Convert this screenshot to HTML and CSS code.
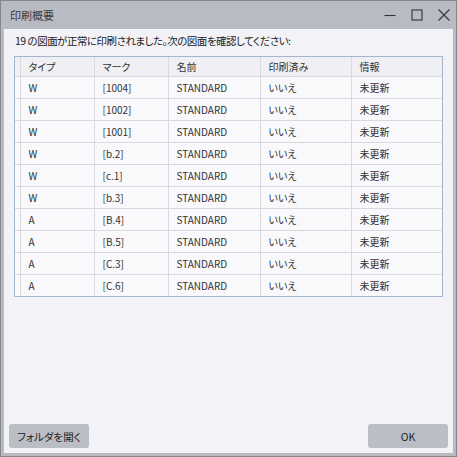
FILE: index.html
```html
<!DOCTYPE html>
<html lang="ja">
<head>
<meta charset="utf-8">
<link rel="stylesheet" href="styles.css">
</head>
<body>
<div class="window">
  <div class="titlebar">
    <div class="title">印刷概要</div>
    <div class="controls">
      <svg class="ctl" width="12" height="12" viewBox="0 0 12 12"><path d="M0.5 6.5H11.5" stroke="#333" stroke-width="1.1" fill="none"/></svg>
      <svg class="ctl" width="12" height="12" viewBox="0 0 12 12"><rect x="1" y="1" width="10" height="10" stroke="#333" stroke-width="1.1" fill="none"/></svg>
      <svg class="ctl" width="12" height="12" viewBox="0 0 12 12"><path d="M0.5 0.5L11.5 11.5M11.5 0.5L0.5 11.5" stroke="#333" stroke-width="1.1" fill="none"/></svg>
    </div>
  </div>
  <div class="content">
    <p class="msg">19 の図面が正常に印刷されました。次の図面を確認してください:</p>
    <div class="grid">
      <table>
        <thead>
          <tr><th class="rh"></th><th class="c1">タイプ</th><th class="c2">マーク</th><th class="c3">名前</th><th class="c4">印刷済み</th><th class="c5">情報</th></tr>
        </thead>
        <tbody>
          <tr><td class="rh"></td><td>W</td><td>[1004]</td><td>STANDARD</td><td>いいえ</td><td>未更新</td></tr>
          <tr><td class="rh"></td><td>W</td><td>[1002]</td><td>STANDARD</td><td>いいえ</td><td>未更新</td></tr>
          <tr><td class="rh"></td><td>W</td><td>[1001]</td><td>STANDARD</td><td>いいえ</td><td>未更新</td></tr>
          <tr><td class="rh"></td><td>W</td><td>[b.2]</td><td>STANDARD</td><td>いいえ</td><td>未更新</td></tr>
          <tr><td class="rh"></td><td>W</td><td>[c.1]</td><td>STANDARD</td><td>いいえ</td><td>未更新</td></tr>
          <tr><td class="rh"></td><td>W</td><td>[b.3]</td><td>STANDARD</td><td>いいえ</td><td>未更新</td></tr>
          <tr><td class="rh"></td><td>A</td><td>[B.4]</td><td>STANDARD</td><td>いいえ</td><td>未更新</td></tr>
          <tr><td class="rh"></td><td>A</td><td>[B.5]</td><td>STANDARD</td><td>いいえ</td><td>未更新</td></tr>
          <tr><td class="rh"></td><td>A</td><td>[C.3]</td><td>STANDARD</td><td>いいえ</td><td>未更新</td></tr>
          <tr><td class="rh"></td><td>A</td><td>[C.6]</td><td>STANDARD</td><td>いいえ</td><td>未更新</td></tr>
        </tbody>
      </table>
    </div>
    <div class="spacer"></div>
    <div class="buttons">
      <button class="btn">フォルダを開く</button>
      <button class="btn">OK</button>
    </div>
  </div>
</div>
</body>
</html>
```
FILE: styles.css
```css
* { box-sizing: border-box; }
html, body { margin: 0; padding: 0; }
body {
  width: 457px; height: 457px; overflow: hidden;
  font-family: "Noto Sans CJK JP", "Noto Sans", sans-serif;
  font-feature-settings: "palt";
  font-size: 10px; color: #222;
  background: #b9bbc3;
}
.window {
  width: 457px; height: 457px;
  border: 1px solid #85878d;
  background: #b9bbc3;
  display: flex; flex-direction: column;
  padding: 0 3px 3px 3px;
}
.titlebar {
  height: 28px; flex: none;
  display: flex; align-items: center; justify-content: space-between;
}
.title { padding-left: 6px; font-size: 11px; color: #3a3a3a; }
.controls { display: flex; gap: 15px; padding-right: 3px; align-items: center; }
.ctl { display: block; }
.content {
  flex: 1; background: #f2f2f7;
  display: flex; flex-direction: column;
  padding: 4px 5px 5px 5px;
}
.msg { margin: 0 0 0 6px; font-size: 10.5px; letter-spacing: -0.5px; line-height: 16px; color: #222; }
.grid {
  margin: 7px 0 0 5px;
  width: 429px;
  border: 1px solid #a3b6cd;
  background: #f2f2f7;
}
table { border-collapse: collapse; width: 100%; table-layout: fixed; }
th, td {
  text-align: left; font-weight: normal; padding: 0 0 0 8px;
  border-right: 1px solid #d9d9de; border-bottom: 1px solid #d9d9de;
  white-space: nowrap; color: #333;
}
th { height: 19px; background: #f0f0f4; font-size: 10px; }
td { height: 22px; background: #f9f9fb; font-size: 10px; }
tbody tr:last-child td { border-bottom: none; }
th:last-child, td:last-child { border-right: none; }
.rh { width: 5px; padding: 0; }
.c1 { width: 74px; }
.c2 { width: 74px; }
.c3 { width: 92px; }
.c4 { width: 91px; }
.spacer { flex: 1; }
.buttons { display: flex; justify-content: space-between; }
.btn {
  width: 80px; height: 24px; border: none; border-radius: 3px;
  background: #bcbec6; font-family: inherit; font-feature-settings: "palt";
  font-size: 10.5px; color: #222;
  padding: 0;
}
```
